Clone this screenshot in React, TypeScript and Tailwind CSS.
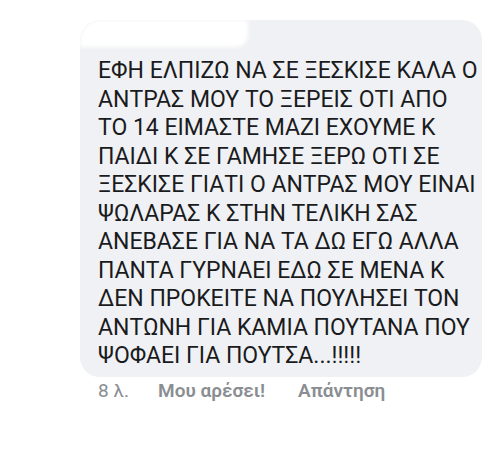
import React from 'react';

const lines = [
  'ΕΦΗ ΕΛΠΙΖΩ ΝΑ ΣΕ ΞΕΣΚΙΣΕ ΚΑΛΑ Ο',
  'ΑΝΤΡΑΣ ΜΟΥ ΤΟ ΞΕΡΕΙΣ ΟΤΙ ΑΠΟ',
  'ΤΟ 14 ΕΙΜΑΣΤΕ ΜΑΖΙ ΕΧΟΥΜΕ Κ',
  'ΠΑΙΔΙ Κ ΣΕ ΓΑΜΗΣΕ ΞΕΡΩ ΟΤΙ ΣΕ',
  'ΞΕΣΚΙΣΕ ΓΙΑΤΙ Ο ΑΝΤΡΑΣ ΜΟΥ ΕΙΝΑΙ',
  'ΨΩΛΑΡΑΣ Κ ΣΤΗΝ ΤΕΛΙΚΗ ΣΑΣ',
  'ΑΝΕΒΑΣΕ ΓΙΑ ΝΑ ΤΑ ΔΩ ΕΓΩ ΑΛΛΑ',
  'ΠΑΝΤΑ ΓΥΡΝΑΕΙ ΕΔΩ ΣΕ ΜΕΝΑ Κ',
  'ΔΕΝ ΠΡΟΚΕΙΤΕ ΝΑ ΠΟΥΛΗΣΕΙ ΤΟΝ',
  'ΑΝΤΩΝΗ ΓΙΑ ΚΑΜΙΑ ΠΟΥΤΑΝΑ ΠΟΥ',
  'ΨΟΦΑΕΙ ΓΙΑ ΠΟΥΤΣΑ...!!!!!',
];

export default function App() {
  return (
    <div className="w-[500px] h-[464px] bg-white overflow-hidden pt-[20px] pl-[80px] pr-[18px] font-['Roboto',sans-serif]">
      {/* Comment bubble */}
      <div className="relative rounded-[20px] bg-[#f0f1f4] pl-[18px] pr-[8px] pt-[37px] pb-[6px]">
        {/* blurred-out name area */}
        <div className="absolute left-0 top-0 w-[168px] h-[27px] rounded-tl-[20px] rounded-br-[12px] bg-white blur-[2px]" />
        <div className="text-[23px] leading-[28.5px] text-[#1a1b1d] whitespace-nowrap">
          {lines.map((l, i) => (
            <div key={i}>{l}</div>
          ))}
        </div>
      </div>

      {/* Actions row */}
      <div className="flex items-center mt-[2px] pl-[18px] text-[19px] leading-[24px] text-[#8a8d91]">
        <span className="w-[60px]">8 λ.</span>
        <span className="font-semibold w-[140px]">Μου αρέσει!</span>
        <span className="font-semibold">Απάντηση</span>
      </div>
    </div>
  );
}
